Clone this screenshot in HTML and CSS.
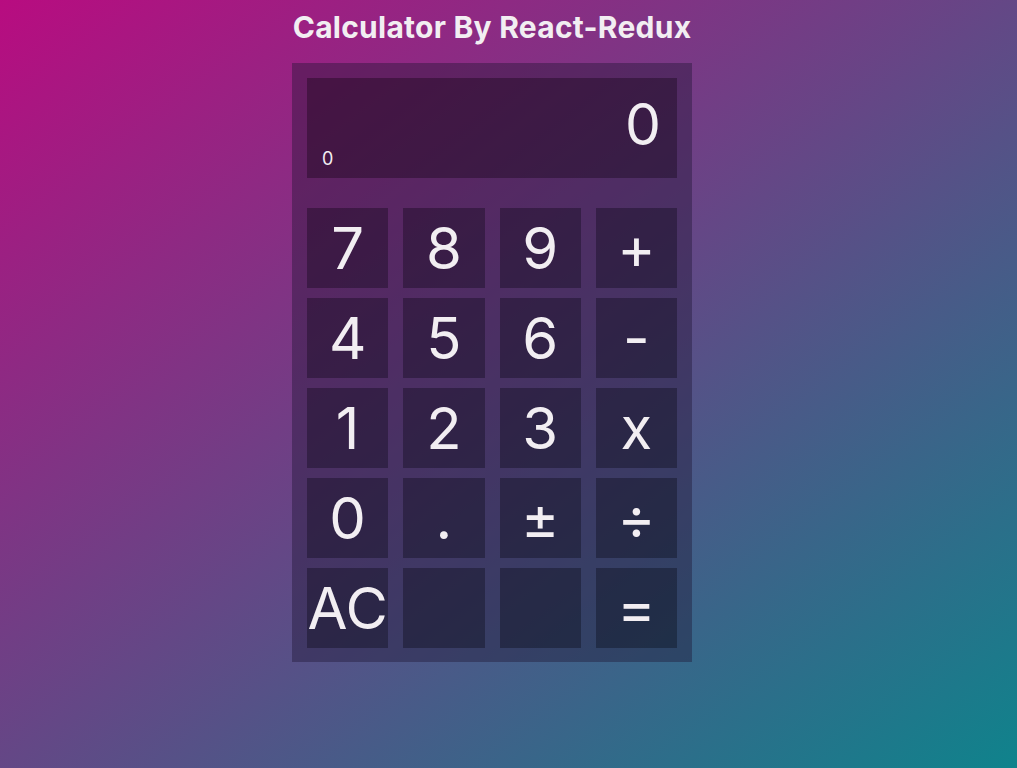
FILE: index.html
```html
<!DOCTYPE html>
<html>
<head>
<meta charset="utf-8">
<link rel="stylesheet" href="styles.css">
</head>
<body>
<div class="app">
  <h1 class="title">Calculator By React-Redux</h1>
  <div class="calc">
    <div class="display">
      <div class="result">0</div>
      <div class="formula">0</div>
    </div>
    <div class="keys">
      <button class="key">7</button>
      <button class="key">8</button>
      <button class="key">9</button>
      <button class="key">+</button>
      <button class="key">4</button>
      <button class="key">5</button>
      <button class="key">6</button>
      <button class="key">-</button>
      <button class="key">1</button>
      <button class="key">2</button>
      <button class="key">3</button>
      <button class="key">x</button>
      <button class="key">0</button>
      <button class="key">.</button>
      <button class="key">±</button>
      <button class="key">÷</button>
      <button class="key">AC</button>
      <button class="key"></button>
      <button class="key"></button>
      <button class="key">=</button>
    </div>
  </div>
</div>
</body>
</html>
```

FILE: styles.css
```css
html, body {
  margin: 0;
  height: 100%;
}
body {
  background: linear-gradient(to bottom right, #b80c80, #0f838c);
  font-family: Inter, "Noto Sans", sans-serif;
  color: #f2eef2;
  overflow: hidden;
}
.app {
  width: 400px;
  margin-left: 292px;
  padding-top: 10px;
}
.title {
  margin: 0 0 18px;
  font-size: 30px;
  font-weight: 700;
  line-height: 35px;
  text-align: center;
  white-space: nowrap;
  letter-spacing: 0.25px;
}
.calc {
  background: rgba(30, 20, 50, 0.4);
  padding: 15px 15px 14px;
}
.display {
  height: 100px;
  background: rgba(10, 0, 10, 0.33);
  position: relative;
  margin-bottom: 30px;
}
.result {
  position: absolute;
  right: 16px;
  top: 12px;
  font-size: 57px;
  line-height: 69px;
  font-weight: 400;
}
.formula {
  position: absolute;
  left: 15px;
  top: 70px;
  font-size: 18px;
  line-height: 22px;
}
.keys {
  display: grid;
  grid-template-columns: repeat(4, 1fr);
  grid-auto-rows: 80px;
  column-gap: 15px;
  row-gap: 10px;
}
.key {
  border: none;
  margin: 0;
  padding: 0;
  background: rgba(0, 0, 5, 0.31);
  color: #f2eef2;
  font-family: Inter, "Noto Sans", sans-serif;
  font-size: 58px;
  font-weight: 400;
  line-height: 1;
  display: flex;
  align-items: center;
  justify-content: center;
  overflow: visible;
  white-space: nowrap;
}
```
